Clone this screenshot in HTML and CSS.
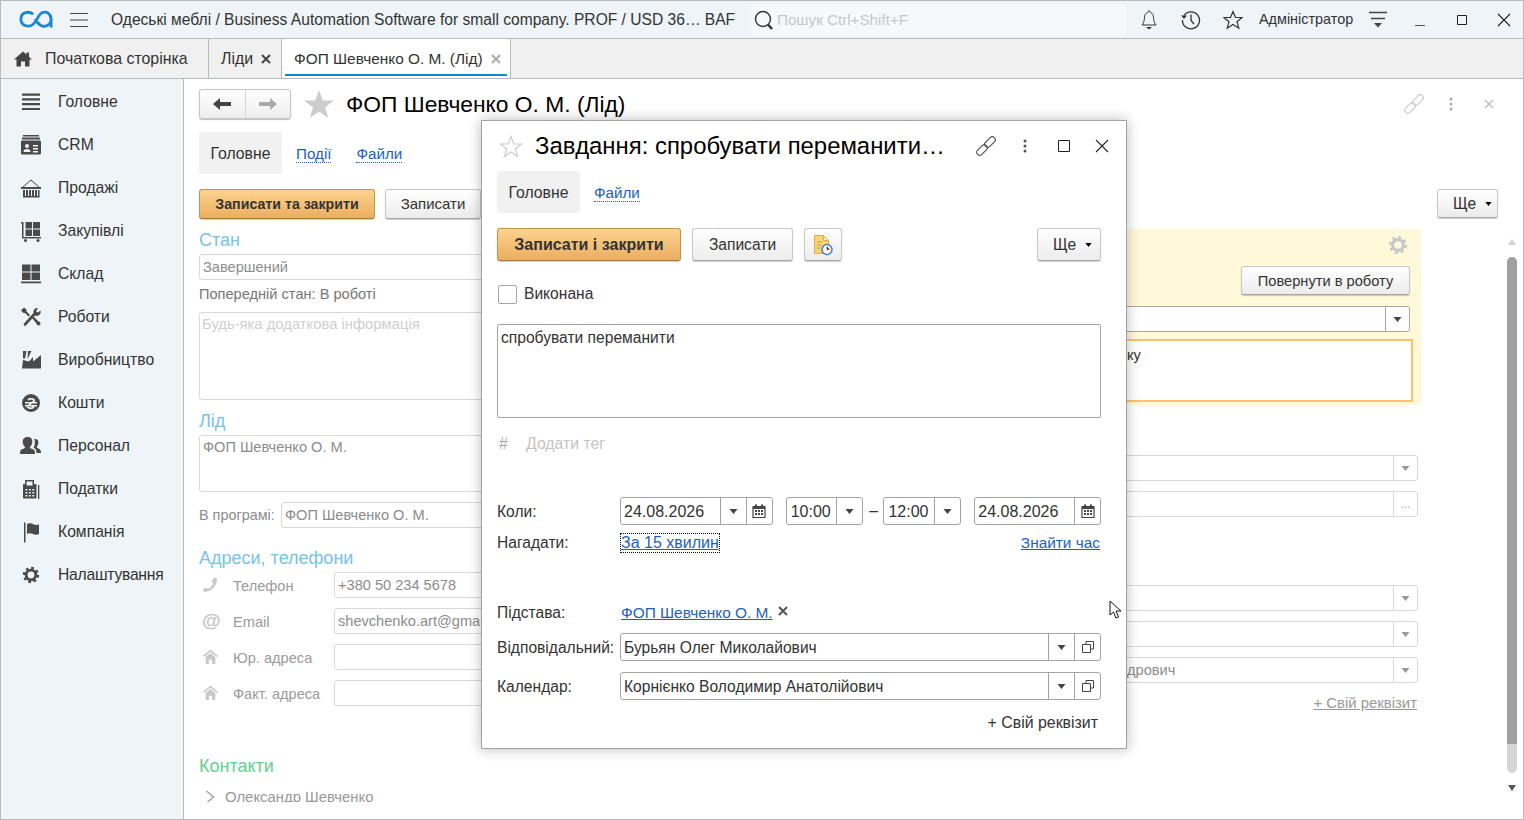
FILE: index.html
```html
<!DOCTYPE html>
<html lang="uk">
<head>
    <meta charset="UTF-8">
    <title>ФОП Шевченко О. М. (Лід)</title>
    <link rel="stylesheet" href="styles.css">
</head>
<body>
    <svg class="defs" width="0" height="0">
        <symbol id="i-caret" viewBox="0 0 9 5"><path d="M0.5 0h8L4.500 5z"/></symbol>
        <symbol id="i-cal" viewBox="0 0 14 14"><path d="M1 2h2V0.500h2V2h4V0.500h2V2h2a.6.6 0 0 1 .6.6v10.800a.6.6 0 0 1-.6.6H1a.6.6 0 0 1-.6-.6V2.600A.6.6 0 0 1 1 2zM1.600 5v8h10.800V5z"/><path d="M3 6h2v2H3zM6 6h2v2H6zM9 6h2v2H9zM3 9h2v2H3zM6 9h2v2H6zM9 9h2v2H9z"/></symbol>
        <symbol id="i-open" viewBox="0 0 14 14"><path fill="none" stroke="#444" d="M5 4.500V1.500h7.500V9H9.500M1.500 4.500h8v8h-8z"/></symbol>
        <symbol id="i-house" viewBox="0 0 14 15"><path fill="none" stroke="currentColor" stroke-width="1.500" d="M.5 7L7 1.500 13.500 7"/><path d="M2.500 7.500L7 3.800l4.500 3.700V14H8.500v-4h-3v4h-3z"/></symbol>
        <symbol id="i-link" viewBox="0 0 22 22"><g fill="none" stroke="currentColor" stroke-width="1.200"><rect x="12" y="0.750" width="6" height="12.500" rx="3" transform="rotate(45 15 7)"/><rect x="4" y="8.750" width="6" height="12.500" rx="3" transform="rotate(45 7 15)"/></g></symbol>
        <symbol id="i-gear" viewBox="0 0 20 20"><circle cx="10" cy="10" r="5.400" fill="none" stroke="currentColor" stroke-width="3.200"/><circle cx="10" cy="10" r="7.800" fill="none" stroke="currentColor" stroke-width="2.600" stroke-dasharray="3 3.120"/></symbol>
    </svg>

    <div class="app">
        <header class="titlebar">
            <svg class="logo" width="34" height="19" viewBox="0 0 36 20"><path fill="none" stroke="#1b87cf" stroke-width="3" d="M15 4.500C11 1 2 1.500 2 9.500s9 9 13 5.500S20 5.500 24 3c5-2.500 10 1 10 7v8.500M34 10c0 5-5 8-9 7s-6-4-8-7.500"/></svg>
            <svg class="burger" width="18" height="14" viewBox="0 0 18 14"><path stroke="#444" d="M0 .5h18M0 7h18M0 13.500h18"/></svg>
            <div class="app-title">Одеські меблі / Business Automation Software for small company. PROF / USD 36… BAF</div>
            <div class="search">
                <svg width="20" height="22" viewBox="0 0 20 22"><circle cx="9" cy="10" r="7.500" fill="none" stroke="#333" stroke-width="1.400"/><path stroke="#333" stroke-width="2.500" d="M14 15.500l4 4.500"/></svg>
                <span>Пошук Ctrl+Shift+F</span>
            </div>
            <div class="bar-icon first">
                <svg width="16" height="20" viewBox="0 0 16 20"><path fill="none" stroke="#333" d="M8 1c-1 0-1.200.7-1.200 1.500C4.500 3.200 3.500 5 3.500 7.500c0 3-1 5.500-2.500 7.500h14c-1.500-2-2.500-4.500-2.500-7.500 0-2.500-1-4.300-3.300-5C9.200 1.700 9 1 8 1z"/><path fill="#333" d="M5 17h6l-3 2.500z"/></svg>
            </div>
            <div class="bar-icon">
                <svg width="20" height="20" viewBox="0 0 20 20"><path fill="none" stroke="#333" stroke-width="1.300" d="M3 5.500A8.500 8.500 0 1 1 1.500 10M10 4.500v6l3 3.500"/><path fill="#333" d="M0 5.500h6L3 9z"/></svg>
            </div>
            <div class="bar-icon">
                <svg width="20" height="20" viewBox="0 0 20 20"><path fill="none" stroke="#333" stroke-width="1.200" d="M10 1.500l2.500 6h6.500l-5 4.200 1.800 6.500-5.800-3.700-5.800 3.700 1.800-6.500-5-4.200h6.500z"/></svg>
            </div>
            <div class="user-name">Адміністратор</div>
            <div class="bar-icon menu">
                <svg width="18" height="18" viewBox="0 0 18 18"><path stroke="#444" stroke-width="1.300" d="M0 1.500h18M2 7.500h14"/><path fill="#444" d="M5 12h8l-4 4.500z"/></svg>
            </div>
            <div class="bar-icon">
                <svg width="12" height="12" viewBox="0 0 12 12"><path stroke="#555" d="M1 11.500h10"/></svg>
            </div>
            <div class="bar-icon">
                <svg width="12" height="12" viewBox="0 0 12 12"><path fill="none" stroke="#222" d="M1.500 1.500h9v9h-9z"/></svg>
            </div>
            <div class="bar-icon">
                <svg width="14" height="14" viewBox="0 0 14 14"><path stroke="#222" stroke-width="1.100" d="M1 1l12 12M13 1L1 13"/></svg>
            </div>
        </header>

        <nav class="tabbar">
            <div class="tab tab-home">
                <svg width="18" height="16" viewBox="0 0 18 16"><path fill="#444" d="M9 .5L0 8.500h2.500V15.500h4.500v-5h4v5h4.500V8.500H18l-3-2.700V1.500h-2.500V3.600z"/></svg>
                <span>Початкова сторінка</span>
            </div>
            <div class="tab tab-list">
                <span>Ліди</span>
                <svg class="tab-x" width="10" height="10" viewBox="0 0 10 10"><path stroke="#444" stroke-width="2" d="M1 1l8 8M9 1L1 9"/></svg>
            </div>
            <div class="tab tab-active">
                <span>ФОП Шевченко О. М. (Лід)</span>
                <svg class="tab-x" width="10" height="10" viewBox="0 0 10 10"><path stroke="#aaa" stroke-width="2" d="M1 1l8 8M9 1L1 9"/></svg>
            </div>
        </nav>

        <div class="main">
            <aside class="sidebar">
                <a class="side-item">
                    <svg class="side-icon" viewBox="0 0 22 22"><path d="M2 2.500h18v2.200H2zM2 7.300h18v2.200H2zM2 12.100h18v2.200H2zM2 16.900h18v2.200H2z"/></svg>
                    Головне
                </a>
                <a class="side-item">
                    <svg class="side-icon" viewBox="0 0 22 22"><path d="M3 1h16v1.500H3zM2 3.500h18V5.500H2z"/><path fill-rule="evenodd" d="M2 6.500h18a1.500 1.500 0 0 1 1 1.500v11a1.500 1.500 0 0 1-1.500 1.500h-17A1.500 1.500 0 0 1 1 19V8a1.500 1.500 0 0 1 1-1.500zM7 10a2 2 0 1 0 0 4 2 2 0 0 0 0-4zM3.500 18h7c0-2-1-3-3.500-3s-3.500 1-3.500 3zM13 11v1.500h5V11zM13 14v1.500h5V14zM13 17v1.500h5V17z"/></svg>
                    CRM
                </a>
                <a class="side-item">
                    <svg class="side-icon" viewBox="0 0 22 22"><path d="M1 10h20v2H1zM3 13h2v6H3zM6 13h2v6H6zM9 13h2v6H9zM12 13h2v6h-2zM15 13h2v6h-2zM18 13h1.500v6H18zM3 19h16.500v1.500H3z"/><path fill="none" stroke="#444" d="M3 10l8-7 8 7"/></svg>
                    Продажі
                </a>
                <a class="side-item">
                    <svg class="side-icon" viewBox="0 0 22 22"><path d="M1 2h2.500v15H21v1.500H2V3.500H1zM5.500 2H12v6.500H5.500zM13 2h7v6.500h-7zM5.500 9.500H12V16H5.500zM13 9.500h7V16h-7z"/><circle cx="5.500" cy="20.500" r="1.500"/><circle cx="18" cy="20.500" r="1.500"/></svg>
                    Закупівлі
                </a>
                <a class="side-item">
                    <svg class="side-icon" viewBox="0 0 22 22"><path d="M2 1.500h8.500v7H2zM11.500 1.500H20v7h-8.500zM2 9.500h8.500v7.500H2zM11.500 9.500H20v7.500h-8.500zM1 18.500h20v1.800H1z"/></svg>
                    Склад
                </a>
                <a class="side-item">
                    <svg class="side-icon" viewBox="0 0 22 22"><path d="M1 4.500l3-3 2.500 2v2l3.500 3.500-1.500 1.500L5 7H3.500zM18 2a4 4 0 0 0-4.500 5L3.500 18l1.500 2.500L15 9.500a4 4 0 0 0 5.500-5l-2.500 2-2-1z"/><path d="M12 12l1.500-1.500 5 5a2 2 0 1 1-2 2z"/></svg>
                    Роботи
                </a>
                <a class="side-item">
                    <svg class="side-icon" viewBox="0 0 22 22"><path d="M3 2h3.500L5 9.500H3zM8 2h3.500L7.500 10zM3 11l6 1.500 4-4.500v4.500L21 6v13.500H2z"/></svg>
                    Виробництво
                </a>
                <a class="side-item">
                    <svg class="side-icon" viewBox="0 0 22 22"><path fill-rule="evenodd" d="M11 2a9 9 0 1 1 0 18 9 9 0 0 1 0-18zM7.500 7.500C8.500 5.500 15 5.500 15 8.500c0 .6-.2 1-.5 1.500H17v1.500h-4.500L10 13h7v1.500h-2.500c.2 3-6.500 3.500-8 .8l1.500-.8c1 1.300 4.500 1 4.300-.1V14.500H5V13h2.500l2.500-1.500H5V10h6.500c1-.5 1.500-1 1.500-1.500C13 7.200 9.500 7.500 9 8.500z"/></svg>
                    Кошти
                </a>
                <a class="side-item">
                    <svg class="side-icon" viewBox="0 0 22 22"><path d="M8 2c3 0 4.500 2 4.300 5-.2 2-1 4-2.300 5 0 1 .7 1.500 3 2.300 1.500.6 2 1.700 2 4.700H0c0-3 .5-4.100 2-4.700C4.300 13.500 5 13 5 12c-1.300-1-2.100-3-2.300-5C2.500 4 4.500 2 8 2z"/><path d="M15 4c2.500 0 3.600 1.500 3.400 4-.2 1.500-.7 3-1.600 3.800 0 .8.500 1.200 2.200 1.900 1.200.5 2 1.300 2 4.300h-4.500c0-3-1-4.500-3-5.300 .9-1.500 1.500-4 1.300-6.200 0-1-.3-2-.8-2.500z"/></svg>
                    Персонал
                </a>
                <a class="side-item">
                    <svg class="side-icon" viewBox="0 0 22 22"><path fill-rule="evenodd" d="M5 2h9v4h1.500a1 1 0 0 1 1 1v12.500a1 1 0 0 1-1 1H4a1 1 0 0 1-1-1V7a1 1 0 0 1 1-1h1zM6.500 3.500v4h6v-4zM5.500 11v1.500h2V11zM9 11v1.500h1.800V11zM12.300 11v1.500h2V11zM5.500 14v1.500h2V14zM9 14v1.500h1.800V14zM12.300 14v1.500h2V14zM5.500 17v1.500h2V17zM9 17v1.500h1.800V17zM12.300 17v1.500h2V17z"/><path d="M18 7h1.300v14H18z"/></svg>
                    Податки
                </a>
                <a class="side-item">
                    <svg class="side-icon" viewBox="0 0 22 22"><path d="M4 1.500h1.500v20H4zM7 3c3-1.500 5-.5 7 .5 2 .7 4 .5 5-.3V13c-2 1-4 .8-6 0-2-1-4-1.300-6 0z"/></svg>
                    Компанія
                </a>
                <a class="side-item side-narrow">
                    <svg class="side-icon side-gear" viewBox="0 0 22 22"><use href="#i-gear" x="2" y="2" width="18" height="18"/></svg>
                    Налаштування
                </a>
            </aside>

            <section class="content">
                <div class="form">
                    <div class="form-head">
                        <div class="nav-btns">
                            <span class="nav-btn"><svg width="18" height="12" viewBox="0 0 18 12"><path fill="#444" d="M0 6l7-6v4h11v4H7v4z"/></svg></span>
                            <span class="nav-btn"><svg width="18" height="12" viewBox="0 0 18 12"><path fill="#aaa" d="M18 6l-7-6v4H0v4h11v4z"/></svg></span>
                        </div>
                        <svg class="big-star" width="30" height="28" viewBox="0 0 30 28"><path fill="#ccc" d="M15 0l3.800 10.500H30l-9 6.800L24.300 28 15 21.500 5.700 28 9 17.300 0 10.500h11.200z"/></svg>
                        <h1 class="form-title">ФОП Шевченко О. М. (Лід)</h1>
                        <svg class="head-link"><use href="#i-link"/></svg>
                        <svg class="head-dots" width="18" height="14" viewBox="0 0 18 14"><circle cx="9" cy="2" r="1.500" fill="#aaa"/><circle cx="9" cy="7" r="1.500" fill="#aaa"/><circle cx="9" cy="12" r="1.500" fill="#aaa"/></svg>
                        <svg class="head-x" width="18" height="10" viewBox="0 0 18 10"><path stroke="#bbb" stroke-width="1.200" d="M5 1l8 8M13 1L5 9"/></svg>
                    </div>

                    <div class="page-tabs">
                        <span class="page-tab">Головне</span>
                        <a class="page-link">Події</a>
                        <a class="page-link">Файли</a>
                    </div>

                    <div class="toolbar">
                        <button class="btn btn-main">Записати та закрити</button>
                        <button class="btn btn-save">Записати</button>
                        <button class="btn btn-more"><span>Ще</span><svg width="7" height="4"><use href="#i-caret"/></svg></button>
                    </div>

                    <div class="columns">
                        <div class="col-left">
                            <h2 class="group-title first">Стан</h2>
                            <div class="inp">Завершений</div>
                            <div class="prev-state">Попередній стан: В роботі</div>
                            <div class="inp inp-note placeholder">Будь-яка додаткова інформація</div>
                            <h2 class="group-title lead">Лід</h2>
                            <div class="inp inp-lead">ФОП Шевченко О. М.</div>
                            <div class="row-program">
                                <span class="program-label">В програмі:</span>
                                <div class="inp">ФОП Шевченко О. М.</div>
                            </div>
                            <h2 class="group-title address">Адреси, телефони</h2>
                            <div class="contact-rows">
                                <div class="contact-row">
                                    <svg class="contact-icon" viewBox="0 0 16 16"><path d="M12 0c2 .5 3 1.500 3 2.500C14.500 9 9 15 2 15.500 1 15.500.3 14 0 13c1-1.200 3-2 4-2 .5.500 1 1 1.500 1C8 11 10.500 8.500 11 6c-.5-.5-1.300-1-1.500-1.500C10 3 11 1 12 0z"/></svg>
                                    <span class="contact-label">Телефон</span>
                                    <div class="inp">+380 50 234 5678</div>
                                </div>
                                <div class="contact-row">
                                    <span class="contact-icon at">@</span>
                                    <span class="contact-label">Email</span>
                                    <div class="inp">shevchenko.art@gma</div>
                                </div>
                                <div class="contact-row">
                                    <svg class="contact-icon"><use href="#i-house"/></svg>
                                    <span class="contact-label">Юр. адреса</span>
                                    <div class="inp"></div>
                                </div>
                                <div class="contact-row">
                                    <svg class="contact-icon"><use href="#i-house"/></svg>
                                    <span class="contact-label">Факт. адреса</span>
                                    <div class="inp"></div>
                                </div>
                            </div>
                            <h2 class="group-title contacts">Контакти</h2>
                            <div class="contact-person">
                                <svg width="10" height="14" viewBox="0 0 10 14"><path fill="none" stroke="#999" stroke-width="1.200" d="M1.500 1l7 6-7 6"/></svg>
                                <span>Олександр Шевченко</span>
                            </div>
                        </div>

                        <div class="col-right">
                            <div class="notice">
                                <svg class="notice-gear"><use href="#i-gear"/></svg>
                                <button class="btn btn-return">Повернути в роботу</button>
                                <div class="inp inp-dark">
                                    <span class="inp-text"></span>
                                    <span class="inp-btn"><svg width="9" height="5"><use href="#i-caret"/></svg></span>
                                </div>
                                <div class="notice-text">ку</div>
                            </div>
                            <div class="inp side-field first-field">
                                <span class="inp-text"></span>
                                <span class="inp-btn faded"><svg width="9" height="5"><use href="#i-caret"/></svg></span>
                            </div>
                            <div class="inp side-field">
                                <span class="inp-text"></span>
                                <span class="inp-btn faded dots">...</span>
                            </div>
                            <div class="inp side-field third-field">
                                <span class="inp-text"></span>
                                <span class="inp-btn faded"><svg width="9" height="5"><use href="#i-caret"/></svg></span>
                            </div>
                            <div class="inp side-field">
                                <span class="inp-text"></span>
                                <span class="inp-btn faded"><svg width="9" height="5"><use href="#i-caret"/></svg></span>
                            </div>
                            <div class="inp side-field">
                                <span class="inp-text person">дрович</span>
                                <span class="inp-btn faded"><svg width="9" height="5"><use href="#i-caret"/></svg></span>
                            </div>
                            <div class="own-attr"><a>+ Свій реквізит</a></div>
                        </div>
                    </div>
                </div>

                <div class="scroll">
                    <span class="scroll-up"></span>
                    <span class="scroll-thumb"></span>
                    <span class="scroll-rest"></span>
                    <span class="scroll-down"></span>
                </div>
            </section>
        </div>

        <!-- task window over the lead form -->
        <div class="dialog">
            <div class="dlg-head">
                <svg class="dlg-star" width="24" height="23" viewBox="0 0 24 23"><path fill="none" stroke="#ccc" stroke-width="1.200" d="M12 1.500l2.800 7.500h7.700l-6.200 5 2.300 7.500L12 17l-6.600 4.500L7.700 14 1.500 9h7.700z"/></svg>
                <div class="dlg-title">Завдання: спробувати переманити…</div>
                <svg class="dlg-link"><use href="#i-link"/></svg>
                <svg class="dlg-dots" width="6" height="14" viewBox="0 0 6 14"><circle cx="3" cy="2" r="1.500" fill="#555"/><circle cx="3" cy="7" r="1.500" fill="#555"/><circle cx="3" cy="12" r="1.500" fill="#555"/></svg>
                <svg class="dlg-max" width="12" height="12" viewBox="0 0 12 12"><path fill="none" stroke="#222" d="M.5 .5h11v11H.5z"/></svg>
                <svg class="dlg-close" width="14" height="14" viewBox="0 0 14 14"><path stroke="#222" stroke-width="1.100" d="M1 1l12 12M13 1L1 13"/></svg>
            </div>

            <div class="page-tabs dlg-tabs">
                <span class="page-tab">Головне</span>
                <a class="page-link">Файли</a>
            </div>

            <div class="dlg-toolbar">
                <button class="btn btn-main">Записати і закрити</button>
                <button class="btn btn-save">Записати</button>
                <button class="btn btn-icon">
                    <svg width="22" height="22" viewBox="0 0 22 22"><path fill="#f6d47c" stroke="#d9b04f" d="M2.500 1.500h9l5 5v13h-14z"/><path fill="#fff3c9" stroke="#d9b04f" d="M11.500 1.500v5h5z"/><path stroke="#c99f44" d="M5 8h5M5 11h4M5 14h3"/><circle cx="15" cy="15.500" r="5" fill="#fff" stroke="#4a7fc0" stroke-width="1.500"/><path stroke="#d24a3a" d="M15 12.500v3h2.500"/></svg>
                </button>
                <button class="btn btn-more"><span>Ще</span><svg width="7" height="4"><use href="#i-caret"/></svg></button>
            </div>

            <label class="check-row">
                <span class="check"></span>
                <span>Виконана</span>
            </label>

            <div class="task-text">спробувати переманити</div>

            <div class="tag-row">
                <span class="tag-hash">#</span>
                <span>Додати тег</span>
            </div>

            <div class="dlg-row row-when">
                <span class="dlg-label">Коли:</span>
                <div class="field field-date">
                    <span class="field-text">24.08.2026</span>
                    <span class="field-btn"><svg width="9" height="5"><use href="#i-caret"/></svg></span>
                    <span class="field-btn"><svg width="14" height="14"><use href="#i-cal"/></svg></span>
                </div>
                <div class="field field-time">
                    <span class="field-text">10:00</span>
                    <span class="field-btn"><svg width="9" height="5"><use href="#i-caret"/></svg></span>
                </div>
                <span class="dash">–</span>
                <div class="field field-time">
                    <span class="field-text">12:00</span>
                    <span class="field-btn"><svg width="9" height="5"><use href="#i-caret"/></svg></span>
                </div>
                <div class="field field-date-end">
                    <span class="field-text">24.08.2026</span>
                    <span class="field-btn"><svg width="14" height="14"><use href="#i-cal"/></svg></span>
                </div>
            </div>

            <div class="dlg-row row-remind">
                <span class="dlg-label">Нагадати:</span>
                <a class="link link-focus">За 15 хвилин</a>
                <a class="link link-time">Знайти час</a>
            </div>

            <div class="dlg-row row-base">
                <span class="dlg-label">Підстава:</span>
                <a class="link link-base">ФОП Шевченко О. М.</a>
                <svg class="base-x" width="10" height="10" viewBox="0 0 10 10"><path stroke="#555" stroke-width="2" d="M1 1l8 8M9 1L1 9"/></svg>
            </div>

            <div class="dlg-row row-owner">
                <span class="dlg-label">Відповідальний:</span>
                <div class="field field-wide">
                    <span class="field-text">Бурьян Олег Миколайович</span>
                    <span class="field-btn"><svg width="9" height="5"><use href="#i-caret"/></svg></span>
                    <span class="field-btn"><svg width="14" height="14"><use href="#i-open"/></svg></span>
                </div>
            </div>

            <div class="dlg-row row-calendar">
                <span class="dlg-label">Календар:</span>
                <div class="field field-wide">
                    <span class="field-text">Корнієнко Володимир Анатолійович</span>
                    <span class="field-btn"><svg width="9" height="5"><use href="#i-caret"/></svg></span>
                    <span class="field-btn"><svg width="14" height="14"><use href="#i-open"/></svg></span>
                </div>
            </div>

            <div class="dlg-attr">+ Свій реквізит</div>
        </div>

        <svg class="cursor" width="14" height="20" viewBox="0 0 14 20"><path fill="#fff" stroke="#111" stroke-width="1" d="M1 1v14l3.500-3 2.500 6 2.500-1-2.500-6h5z"/></svg>
    </div>
</body>
</html>
```

FILE: styles.css
```css
:root {
    --line: #b6bbbe;
    --side-bg: #eef4f7;
    --text: #333;
    --faded: #8c8c8c;
    --link: #1c5fc4;
}

* {
    box-sizing: border-box;
    margin: 0;
    padding: 0;
}

html, body {
    height: 100%;
    overflow: hidden;
}

body {
    font-family: "Liberation Sans", Arial, sans-serif;
    font-size: 15.6px;
    color: var(--text);
    background: #fff;
}

.defs {
    position: absolute;
}

svg {
    flex: none;
    display: block;
}

.app {
    position: relative;
    width: 1524px;
    height: 820px;
    border: 1px solid var(--line);
    display: flex;
    flex-direction: column;
    overflow: hidden;
}

/* top bar */
.titlebar {
    height: 38px;
    flex: none;
    display: flex;
    align-items: center;
    background: var(--side-bg);
    border-bottom: 1px solid var(--line);
}

.logo {
    margin-left: 18px;
}

.burger {
    margin-left: 17px;
}

.app-title {
    width: 640px;
    flex: none;
    margin-left: 23px;
    white-space: nowrap;
    overflow: hidden;
}

.search {
    width: 375px;
    flex: none;
    height: 32px;
    display: flex;
    align-items: center;
    padding-left: 3px;
    gap: 3px;
    font-size: 15.200px;
    background: #f5f9fb;
    border-radius: 3px;
    color: #c8c8c8;
}

.bar-icon {
    width: 42px;
    height: 36px;
    flex: none;
    display: flex;
    align-items: center;
    justify-content: center;
}

.bar-icon.first {
    margin-left: 2px;
}

.bar-icon.menu {
    margin-left: 3px;
}

.user-name {
    width: 95px;
    flex: none;
    margin-left: 5px;
    padding-bottom: 1px;
    font-size: 14.400px;
    white-space: nowrap;
}

/* open tabs */
.tabbar {
    height: 40px;
    flex: none;
    display: flex;
    background: #f0f0f0;
    border-bottom: 1px solid var(--line);
}

.tab {
    display: flex;
    align-items: center;
    height: 39px;
    border-right: 1px solid var(--line);
}

.tab-home {
    width: 208px;
    padding-left: 13px;
    gap: 13px;
    font-size: 15.900px;
}

.tab-list {
    width: 73px;
    padding-left: 12px;
    gap: 8px;
    font-size: 15.900px;
}

.tab-active {
    position: relative;
    width: 229px;
    padding-left: 12px;
    gap: 8px;
    font-size: 15.400px;
    background: #fff;
}

.tab-active::after {
    content: "";
    position: absolute;
    left: 3px;
    right: 3px;
    bottom: 2px;
    height: 2px;
    background: #0d8ac7;
}

.main {
    flex: 1;
    min-height: 0;
    display: flex;
}

/* section panel */
.sidebar {
    width: 183px;
    flex: none;
    padding-top: 1px;
    background: var(--side-bg);
    border-right: 1px solid var(--line);
}

.side-item {
    height: 43px;
    display: flex;
    align-items: center;
    padding-left: 19px;
    gap: 16px;
    font-size: 15.700px;
}

.side-narrow {
    letter-spacing: -0.25px;
}

.side-icon {
    width: 22px;
    height: 22px;
    fill: #4a4a4a;
}

.side-gear {
    color: #4a4a4a;
}

/* lead form */
.content {
    flex: 1;
    min-width: 0;
    display: flex;
    overflow: hidden;
}

.form {
    flex: 1;
    min-width: 0;
    padding: 10px 2px 0 15px;
    overflow: hidden;
}

.form-head {
    display: flex;
    align-items: center;
    height: 30px;
}

.nav-btns {
    display: flex;
    width: 92px;
    height: 30px;
    border: 1px solid #c5c5c5;
    border-radius: 3px;
    background: linear-gradient(#fff, #eee);
    box-shadow: 0 1px 1px rgba(0, 0, 0, 0.25);
}

.nav-btn {
    flex: 1;
    display: flex;
    align-items: center;
    justify-content: center;
}

.nav-btn + .nav-btn {
    border-left: 1px solid #d5d5d5;
}

.big-star {
    margin-left: 13px;
}

.form-title {
    margin-left: 12px;
    font-size: 22.800px;
    font-weight: normal;
    color: #000;
    white-space: nowrap;
}

.head-link {
    width: 22px;
    height: 22px;
    margin-left: auto;
    color: #ccc;
}

.head-dots {
    margin-left: 17px;
}

.head-x {
    margin-left: 20px;
}

.page-tabs {
    display: flex;
    align-items: center;
    height: 42px;
    margin-top: 13px;
    font-size: 15.800px;
}

.page-tab {
    width: 83px;
    height: 42px;
    display: flex;
    align-items: center;
    justify-content: center;
    padding-top: 2px;
    background: #f1f1f1;
    border-radius: 3px;
}

.page-link {
    margin-left: 14px;
    margin-top: 2px;
    font-size: 15.200px;
    color: var(--link);
    border-bottom: 1px dotted var(--link);
    line-height: 16px;
}

.page-link + .page-link {
    margin-left: 25px;
}

.toolbar {
    display: flex;
    margin-top: 15px;
    height: 30px;
}

.btn {
    font: inherit;
    color: var(--text);
    border: 1px solid #c8c8c8;
    border-bottom-color: #a8a8a8;
    border-radius: 3px;
    background: linear-gradient(#fff, #ececec);
    box-shadow: 0 1px 1px rgba(0, 0, 0, 0.2);
    white-space: nowrap;
}

.btn-main {
    font-weight: bold;
    border-color: #c0954c;
    border-bottom-color: #a87c34;
    background: linear-gradient(#fdd390, #eaae60);
}

.toolbar .btn-main {
    width: 176px;
    font-size: 14.200px;
}

.toolbar .btn-save {
    width: 96px;
    margin-left: 10px;
    padding-bottom: 2px;
    font-size: 15px;
}

.btn-more {
    display: flex;
    align-items: center;
    gap: 9px;
    margin-left: auto;
    padding-left: 15px;
}

.toolbar .btn-more {
    width: 61px;
    height: 29px;
}

.columns {
    display: grid;
    grid-template-columns: 1fr 321px;
    gap: 20px;
    margin-right: 77px;
}

.group-title {
    height: 20px;
    font-size: 18px;
    font-weight: normal;
    line-height: 20px;
    color: #76c3ea;
}

.group-title.first {
    margin-top: 11px;
    margin-bottom: 4px;
}

.group-title.lead {
    margin-top: 11px;
    margin-bottom: 4px;
}

.group-title.address {
    margin-top: 20px;
    margin-bottom: 4px;
}

.group-title.contacts {
    margin-top: 50px;
    color: #63cf94;
}

.inp {
    display: flex;
    align-items: center;
    height: 26px;
    padding-left: 3px;
    font-size: 14.600px;
    color: var(--faded);
    background: #fff;
    border: 1px solid #d9d9d9;
    border-radius: 3px;
    white-space: nowrap;
    overflow: hidden;
}

.prev-state {
    margin-top: 4px;
    height: 20px;
    line-height: 20px;
    font-size: 14.600px;
    color: #767676;
}

.inp-note {
    margin-top: 8px;
    height: 88px;
    align-items: flex-start;
    padding-top: 3px;
    padding-left: 2px;
    font-size: 14.800px;
}

.placeholder {
    color: #cfcfcf;
}

.inp-lead {
    height: 57px;
    align-items: flex-start;
    padding-top: 3px;
}

.row-program {
    display: flex;
    align-items: center;
    margin-top: 10px;
}

.program-label {
    width: 82px;
    flex: none;
    font-size: 14.400px;
    color: var(--faded);
}

.row-program .inp {
    flex: 1;
}

.contact-rows {
    display: flex;
    flex-direction: column;
    gap: 10px;
}

.contact-row {
    display: flex;
    align-items: center;
}

.contact-row .inp {
    flex: 1;
    padding-bottom: 1px;
}

.contact-icon {
    width: 15px;
    height: 16px;
    margin-left: 4px;
    fill: #c8c8c8;
    color: #c8c8c8;
}

.contact-icon.at {
    width: 19px;
    margin-left: 3px;
    font-size: 19px;
    font-weight: bold;
    line-height: 16px;
    color: #c4c4c4;
}

.contact-label {
    width: 101px;
    flex: none;
    margin-left: 15px;
    padding-top: 1px;
    font-size: 14.600px;
    color: #9a9a9a;
    white-space: nowrap;
}

.contact-icon.at + .contact-label {
    margin-left: 12px;
}

.contact-person {
    display: flex;
    align-items: flex-start;
    gap: 10px;
    height: 16px;
    margin-top: 10px;
    padding-left: 6px;
    font-size: 14.900px;
    line-height: 22px;
    color: #999;
    overflow: hidden;
}

.contact-person svg {
    margin-top: 4px;
}

/* right side of the form, mostly under the task window */
.col-right {
    min-width: 0;
}

.notice {
    height: 176px;
    margin-top: 10px;
    padding: 6px 8px 0 0;
    background: #fff9d9;
}

.notice-gear {
    width: 20px;
    height: 20px;
    margin-left: auto;
    margin-right: 5px;
    color: #c8c8c8;
}

.btn-return {
    display: block;
    width: 169px;
    height: 29px;
    margin: 11px 3px 0 auto;
    font-size: 14.650px;
}

.inp-dark {
    margin: 11px 3px 0 0;
    padding-left: 0;
    border-color: #a6a6a6;
}

.inp-text {
    flex: 1;
}

.inp-btn {
    width: 24px;
    height: 100%;
    flex: none;
    display: flex;
    align-items: center;
    justify-content: center;
    border-left: 1px solid #a6a6a6;
    fill: #444;
}

.inp-btn.faded {
    border-left-color: #d9d9d9;
    fill: #999;
}

.inp-btn.dots {
    color: #aaa;
    font-size: 12px;
}

.notice-text {
    height: 63px;
    margin-top: 7px;
    padding: 6px 0 0 25px;
    font-size: 14.600px;
    color: var(--text);
    background: #fff;
    border: 2px solid #fdc36b;
}

.side-field {
    margin-right: 3px;
    padding-left: 0;
    margin-top: 10px;
}

.first-field {
    margin-top: 50px;
}

.third-field {
    margin-top: 68px;
}

.person {
    padding-left: 26px;
}

.own-attr {
    margin: 12px 4px 0 0;
    text-align: right;
    font-size: 14.900px;
    color: #999;
}

.own-attr a {
    text-decoration: underline;
}

.scroll {
    width: 23px;
    flex: none;
    display: flex;
    flex-direction: column;
    align-items: center;
}

.scroll-up {
    margin-top: 160px;
    border: 4px solid transparent;
    border-top: 0;
    border-bottom: 6px solid #d4d4d4;
}

.scroll-thumb {
    width: 10px;
    height: 487px;
    margin-top: 12px;
    background: #a0a0a0;
    border-radius: 5px 5px 0 0;
}

.scroll-rest {
    width: 10px;
    height: 29px;
    background: #d6d6d6;
    border-radius: 0 0 5px 5px;
}

.scroll-down {
    margin-top: 12px;
    border: 4px solid transparent;
    border-bottom: 0;
    border-top: 6px solid #555;
}

/* task window */
.dialog {
    position: absolute;
    left: 480px;
    top: 119px;
    width: 646px;
    height: 629px;
    padding: 0 25px 0 15px;
    background: #fff;
    border: 1px solid #a3a3a3;
    box-shadow: 0 0 12px rgba(0, 0, 0, 0.28);
}

.dlg-head {
    display: flex;
    align-items: center;
    height: 50px;
}

.dlg-star {
    margin-left: 2px;
}

.dlg-title {
    width: 420px;
    flex: none;
    margin-left: 12px;
    font-size: 23.900px;
    color: #000;
    white-space: nowrap;
}

.dlg-link {
    width: 22px;
    height: 22px;
    margin-left: 20px;
    color: #555;
}

.dlg-dots {
    margin-left: 25px;
}

.dlg-max {
    margin-left: 30px;
}

.dlg-close {
    margin-left: 25px;
}

.dlg-tabs {
    margin-top: 0;
}

.dlg-toolbar {
    display: flex;
    height: 33px;
    margin-top: 15px;
}

.dlg-toolbar .btn-main {
    width: 184px;
    font-size: 16px;
}

.dlg-toolbar .btn-save {
    width: 101px;
    margin-left: 11px;
}

.btn-icon {
    width: 38px;
    margin-left: 11px;
    display: flex;
    align-items: center;
    justify-content: center;
}

.dlg-toolbar .btn-more {
    width: 64px;
}

.check-row {
    display: flex;
    align-items: center;
    gap: 7px;
    height: 20px;
    margin-top: 23px;
    margin-left: 1px;
}

.check {
    width: 19px;
    height: 19px;
    border: 1px solid #a6a6a6;
    border-radius: 2px;
}

.task-text {
    height: 94px;
    margin-top: 20px;
    padding: 4px 3px;
    border: 1px solid #a3a3a3;
    border-radius: 2px;
}

.tag-row {
    display: flex;
    align-items: center;
    height: 24px;
    margin-top: 13px;
    padding-top: 2px;
    font-size: 15.800px;
    color: #c4c4c4;
}

.tag-hash {
    width: 29px;
    padding-left: 2px;
    color: #aaa;
}

.dlg-row {
    display: flex;
    align-items: center;
}

.dlg-label {
    width: 123px;
    flex: none;
    white-space: nowrap;
}

.row-when .dlg-label,
.row-owner .dlg-label,
.row-calendar .dlg-label {
    padding-top: 2px;
}

.row-when {
    margin-top: 42px;
}

.row-remind {
    height: 22px;
    margin-top: 6px;
    padding-top: 2px;
}

.row-base {
    height: 22px;
    margin-top: 48px;
    padding-top: 2px;
}

.row-owner {
    margin-top: 10px;
}

.row-calendar {
    margin-top: 11px;
}

.field {
    display: flex;
    height: 28px;
    background: #fff;
    border: 1px solid #a3a3a3;
    border-radius: 3px;
}

.field-text {
    flex: 1;
    min-width: 0;
    display: flex;
    align-items: center;
    padding-left: 3px;
    padding-top: 2px;
    white-space: nowrap;
}

.field-date .field-text,
.field-time .field-text,
.field-date-end .field-text {
    font-size: 16px;
}

.field-time .field-text {
    padding-left: 4px;
}

.field-btn {
    width: 26px;
    flex: none;
    display: flex;
    align-items: center;
    justify-content: center;
    border-left: 1px solid #a3a3a3;
    fill: #444;
}

.field-date {
    width: 153px;
}

.field-time {
    width: 78px;
    margin-left: 13px;
}

.field-time + .dash + .field-time {
    margin-left: 5px;
}

.dash {
    margin-left: 5px;
    width: 10px;
    text-align: center;
}

.field-date-end {
    width: 127px;
    margin-left: 13px;
}

.field-wide {
    flex: 1;
}

.link {
    font-size: 15.400px;
    color: var(--link);
    text-decoration: underline;
}

.link-focus {
    margin-left: 1px;
    font-size: 16px;
    outline: 1px dotted #111;
}

.link-time {
    margin-left: auto;
    margin-right: 1px;
}

.link-base {
    margin-left: 1px;
}

.base-x {
    margin: -5px 0 0 5px;
}

.dlg-attr {
    height: 20px;
    margin-top: 13px;
    padding-right: 3px;
    font-size: 15.900px;
    line-height: 20px;
    text-align: right;
}

.cursor {
    position: absolute;
    left: 1108px;
    top: 599px;
}
```
